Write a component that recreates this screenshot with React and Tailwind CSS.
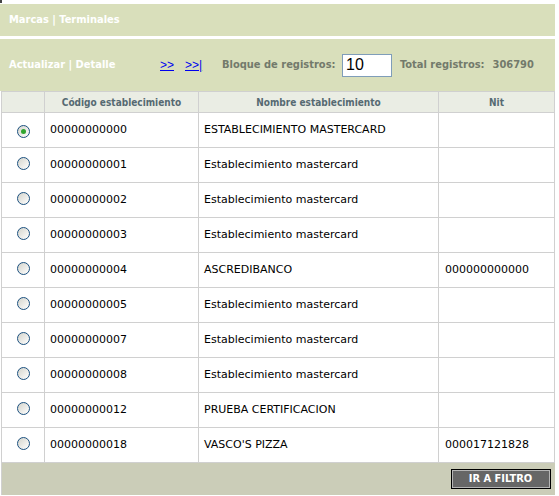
const rows = [
  ["00000000000", "ESTABLECIMIENTO MASTERCARD", "", true],
  ["00000000001", "Establecimiento mastercard", ""],
  ["00000000002", "Establecimiento mastercard", ""],
  ["00000000003", "Establecimiento mastercard", ""],
  ["00000000004", "ASCREDIBANCO", "000000000000"],
  ["00000000005", "Establecimiento mastercard", ""],
  ["00000000007", "Establecimiento mastercard", ""],
  ["00000000008", "Establecimiento mastercard", ""],
  ["00000000012", "PRUEBA CERTIFICACION", ""],
  ["00000000018", "VASCO'S PIZZA", "000017121828"],
];

function Radio({ checked }) {
  return (
    <span className="inline-flex items-center justify-center w-[13px] h-[13px] rounded-full border border-[#1c5180] bg-gradient-to-br from-[#d4d4cc] to-white">
      {checked && <span className="w-[5px] h-[5px] rounded-full bg-[#2fa52f]" />}
    </span>
  );
}

export default function App() {
  return (
    <div className="w-[559px] h-[496px] bg-white font-['DejaVu_Sans',sans-serif] text-[11px] text-black">
      <div className="h-[4px]">
        <span className="block w-[2px] h-[3px] bg-[#444]" />
      </div>

      <div className="w-[555px] h-[32px] bg-[#d9dfbb] flex items-center pl-[9px] text-white font-bold font-['DejaVu_Sans_Condensed','DejaVu_Sans',sans-serif]">
        Marcas | Terminales
      </div>

      <div className="h-[3px]" />

      <div className="w-[555px] h-[52px] bg-[#d9dfbb] flex items-center pl-[9px] font-bold font-['DejaVu_Sans_Condensed','DejaVu_Sans',sans-serif]">
        <span className="w-[151px] text-white">Actualizar | Detalle</span>
        <a href="#" className="w-[25px] text-[#0000ee] underline font-normal font-['Liberation_Sans',sans-serif] text-[12px]">&gt;&gt;</a>
        <a href="#" className="w-[37px] text-[#0000ee] underline font-normal font-['Liberation_Sans',sans-serif] text-[12px]">&gt;&gt;|</a>
        <span className="w-[120px] text-[#737a6b]">Bloque de registros:</span>
        <input
          defaultValue="10"
          className="w-[50px] h-[23px] bg-white border border-[#7f9db9] px-[3px] text-[16px] font-normal font-['Liberation_Sans',sans-serif] text-black outline-none"
        />
        <span className="ml-[8px] text-[#737a6b]">Total registros:</span>
        <span className="ml-[8px] text-[#737a6b]">306790</span>
      </div>

      <table className="ml-[1px] w-[553px] border-collapse table-fixed">
        <colgroup>
          <col className="w-[43px]" />
          <col className="w-[154px]" />
          <col className="w-[240px]" />
          <col className="w-[116px]" />
        </colgroup>
        <thead>
          <tr className="h-[21px] bg-[#eaede4] text-[#566a72] font-bold text-[10px] font-['DejaVu_Sans_Condensed','DejaVu_Sans',sans-serif]">
            <th className="border border-[#d0d0d0]"></th>
            <th className="border border-[#d0d0d0] font-bold">Código establecimiento</th>
            <th className="border border-[#d0d0d0] font-bold">Nombre establecimiento</th>
            <th className="border border-[#d0d0d0] font-bold">Nit</th>
          </tr>
        </thead>
        <tbody>
          {rows.map(([code, name, nit, checked]) => (
            <tr key={code} className="h-[35px]">
              <td className="border border-[#d0d0d0] text-center align-middle pt-[2px]">
                <Radio checked={checked} />
              </td>
              <td className="border border-[#d0d0d0] pl-[5px]">{code}</td>
              <td className="border border-[#d0d0d0] pl-[5px]">{name}</td>
              <td className="border border-[#d0d0d0] pl-[6px]">{nit}</td>
            </tr>
          ))}
          <tr className="h-[32px] bg-[#cbcdb8]">
            <td colSpan={4} className="border-l border-[#d0d0d0]">
              <div className="flex justify-end pr-[4px]">
                <button className="w-[100px] h-[20px] bg-[#666] border border-black shadow-[inset_0_0_0_1px_#b5b5b5] text-white font-bold text-[11px] font-['DejaVu_Sans_Condensed','DejaVu_Sans',sans-serif]">
                  IR A FILTRO
                </button>
              </div>
            </td>
          </tr>
        </tbody>
      </table>
    </div>
  );
}
